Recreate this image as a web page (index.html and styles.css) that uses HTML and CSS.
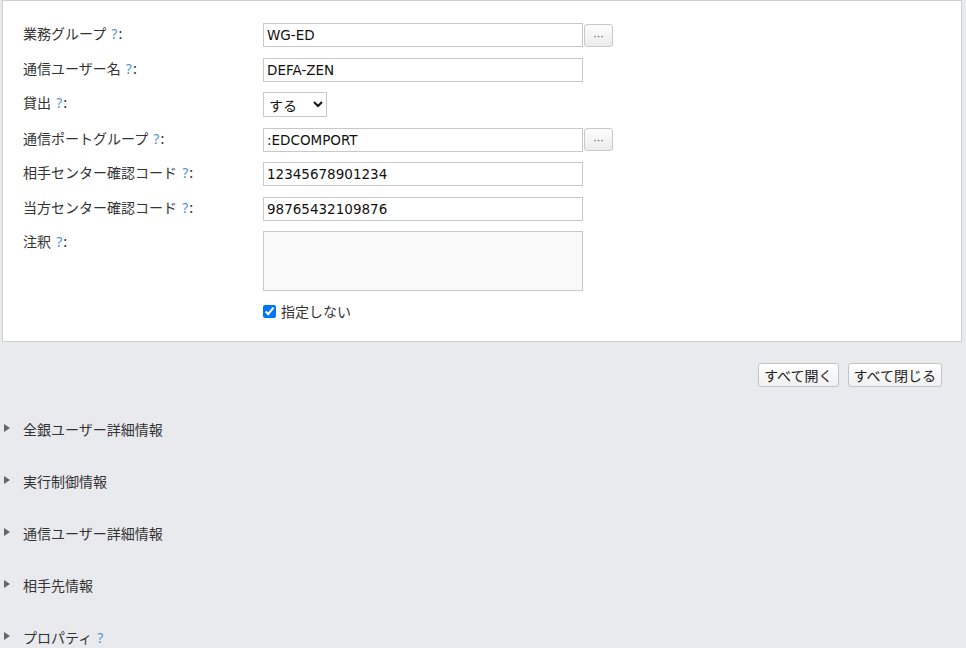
FILE: index.html
```html
<!DOCTYPE html>
<html lang="ja">
<head>
<meta charset="utf-8">
<link rel="stylesheet" href="styles.css">
</head>
<body>
<div class="panel">
  <div class="form">
    <div class="label">業務グループ <span class="help">?</span>:</div>
    <div class="field"><input class="text" type="text" value="WG-ED"><button class="pick">···</button></div>

    <div class="label">通信ユーザー名 <span class="help">?</span>:</div>
    <div class="field"><input class="text" type="text" value="DEFA-ZEN"></div>

    <div class="label">貸出 <span class="help">?</span>:</div>
    <div class="field"><select class="sel"><option>する</option><option>しない</option></select></div>

    <div class="label">通信ポートグループ <span class="help">?</span>:</div>
    <div class="field"><input class="text" type="text" value=":EDCOMPORT"><button class="pick">···</button></div>

    <div class="label">相手センター確認コード <span class="help">?</span>:</div>
    <div class="field"><input class="text" type="text" value="12345678901234"></div>

    <div class="label">当方センター確認コード <span class="help">?</span>:</div>
    <div class="field"><input class="text" type="text" value="98765432109876"></div>

    <div class="label">注釈 <span class="help">?</span>:</div>
    <div class="field col">
      <textarea class="area"></textarea>
      <label class="check"><input type="checkbox" checked><span>指定しない</span></label>
    </div>
  </div>
</div>

<div class="actions">
  <button class="btn">すべて開く</button>
  <button class="btn">すべて閉じる</button>
</div>

<div class="sections">
  <div class="section"><span class="tri"></span>全銀ユーザー詳細情報</div>
  <div class="section"><span class="tri"></span>実行制御情報</div>
  <div class="section"><span class="tri"></span>通信ユーザー詳細情報</div>
  <div class="section"><span class="tri"></span>相手先情報</div>
  <div class="section"><span class="tri"></span>プロパティ <span class="help">?</span></div>
</div>
</body>
</html>
```
FILE: styles.css
```css
html, body {
  margin: 0;
  padding: 0;
}
body {
  background: #e9eaee;
  font-family: "Noto Sans CJK JP", "Noto Sans", sans-serif;
  font-size: 14px;
  color: #333;
  height: 648px;
  overflow: hidden;
}
.panel {
  margin: 0 4px 0 2px;
  background: #fff;
  border: 1px solid #cfcfcf;
  padding: 22px 20px 22px 20px;
}
.form {
  display: grid;
  grid-template-columns: 240px 1fr;
  row-gap: 10.5px;
}
.label {
  line-height: 20px;
  white-space: nowrap;
}
.help {
  color: #4e97d8;
  font-family: "Noto Sans", sans-serif;
  margin-left: 2px;
  margin-right: 1px;
}
.field {
  display: flex;
  align-items: center;
}
.field.col {
  flex-direction: column;
  align-items: flex-start;
}
.text {
  box-sizing: border-box;
  width: 320px;
  height: 24px;
  margin: 0;
  border: 1px solid #c8c8c8;
  padding: 0 3px;
  font-family: "DejaVu Sans", sans-serif;
  font-size: 13.5px;
  color: #111;
  background: #fff;
  outline: none;
}
.pick {
  box-sizing: border-box;
  width: 29px;
  height: 23px;
  margin: 0 0 0 1px;
  padding: 0;
  border: 1px solid #c8c8c8;
  border-radius: 3px;
  background: linear-gradient(#fdfdfd, #ececec);
  color: #555;
  font-size: 11px;
  font-family: "DejaVu Sans", sans-serif;
  line-height: 23px;
}
.sel {
  box-sizing: border-box;
  width: 64px;
  height: 25px;
  margin: 0;
  border: 1px solid #c8c8c8;
  border-radius: 0;
  background: #fff;
  font-family: "Noto Sans CJK JP", sans-serif;
  font-size: 14px;
  color: #111;
  padding: 0 0 0 1px;
}
.area {
  box-sizing: border-box;
  width: 320px;
  height: 60px;
  margin: 0;
  border: 1px solid #c8c8c8;
  background: #f9f9f9;
  resize: none;
  outline: none;
}
.check {
  display: flex;
  align-items: center;
  margin-top: 12px;
  line-height: 16px;
}
.check input {
  width: 13px;
  height: 13px;
  margin: 0 5px 0 0;
}
.actions {
  display: flex;
  justify-content: flex-end;
  gap: 9px;
  margin: 21px 24px 0 0;
}
.btn {
  box-sizing: border-box;
  height: 24px;
  padding: 0 5px;
  border: 1px solid #c4c4c4;
  border-radius: 3px;
  background: linear-gradient(#ffffff, #f0f0f0);
  font-family: "Noto Sans CJK JP", sans-serif;
  font-size: 14px;
  color: #222;
  line-height: 20px;
}
.sections {
  margin-top: 16px;
}
.section {
  height: 52px;
  display: flex;
  align-items: center;
  padding-left: 4px;
  color: #333;
}
.tri {
  width: 0;
  height: 0;
  border-top: 4px solid transparent;
  border-bottom: 4px solid transparent;
  border-left: 6px solid #666;
  margin-right: 13px;
  margin-top: -2px;
}
.section .help {
  margin-left: 5px;
}
```
